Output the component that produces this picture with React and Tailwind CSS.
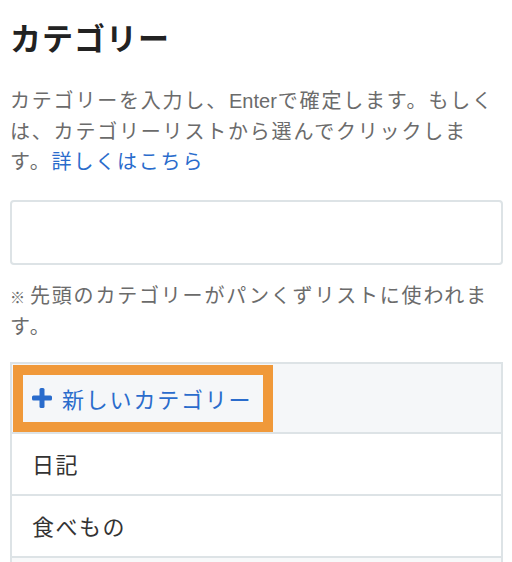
export default function App() {
  return (
    <div
      className="w-[512px] h-[562px] overflow-hidden bg-white px-[10px]"
      style={{ fontFamily: '"Noto Sans CJK JP", "Noto Sans", sans-serif' }}
    >
      <h1 className="pt-[19px] text-[31px] leading-[36px] font-bold tracking-[1px] text-[#222]">
        カテゴリー
      </h1>
      <p className="mt-[30px] text-[20px] leading-[30.5px] tracking-[1.8px] text-[#6b6b6b]">
        カテゴリーを入力し、<span className="text-[20px] leading-[20px] tracking-[0px] mx-[1px]" style={{ fontFamily: '"Liberation Sans", Arial, sans-serif' }}>Enter</span>で確定します。もしくは、カテゴリーリストから選んでクリックします。<a className="text-[#2a6ccc]">詳しくはこちら</a>
      </p>
      <div className="mt-[23px] h-[65px] w-[493px] rounded-[4px] border-2 border-[#dde3e6] bg-white" />
      <p className="mt-[14px] text-[20px] leading-[31px] tracking-[1.8px] text-[#6b6b6b]">
        <span className="text-[15px] leading-[15px] tracking-[0px] mr-[5px]">※</span>先頭のカテゴリーがパンくずリストに使われます。
      </p>
      <div className="mt-[21px] w-[493px] border-2 border-b-0 border-[#dde3e6]">
        <div className="h-[68px] bg-[#f5f7f9] pt-[1px] pl-[1px]">
          <button className="relative z-10 flex h-[67px] w-[260px] items-center gap-[10px] border-[10px] border-[#f0993a] bg-[#f5f7f9] pl-[9px] text-[22px] tracking-[1.8px] text-[#2a6ccc]">
            <svg width="20" height="20" viewBox="0 0 20 20" className="shrink-0">
              <rect x="7.5" y="0" width="5" height="20" rx="1.5" fill="#2a6ccc" />
              <rect x="0" y="7.5" width="20" height="5" rx="1.5" fill="#2a6ccc" />
            </svg>
            <span className="leading-none">新しいカテゴリー</span>
          </button>
        </div>
        <div className="flex h-[62px] items-center border-t-2 border-[#dde3e6] pl-[20px] text-[22px] tracking-[1.5px] text-[#333]">
          日記
        </div>
        <div className="flex h-[62px] items-center border-t-2 border-[#dde3e6] pl-[20px] text-[22px] tracking-[1.5px] text-[#333]">
          食べもの
        </div>
        <div className="h-[62px] border-t-2 border-[#dde3e6] bg-[#f8f9fa]" />
      </div>
    </div>
  );
}
